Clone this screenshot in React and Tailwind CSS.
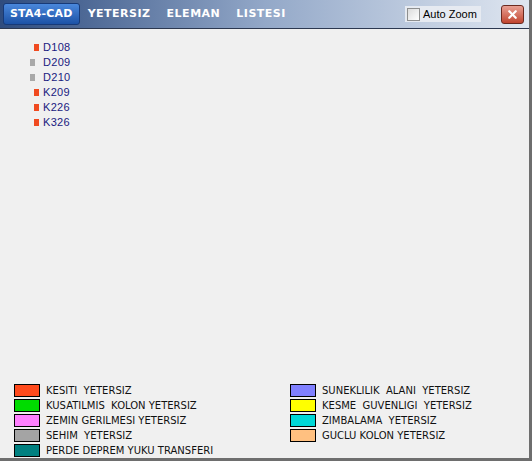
import { X } from 'lucide-react';

const elements = [
  { name: 'D108', color: 'bg-[#f04a20]', indent: false },
  { name: 'D209', color: 'bg-[#a8a8a8]', indent: true },
  { name: 'D210', color: 'bg-[#a8a8a8]', indent: true },
  { name: 'K209', color: 'bg-[#f04a20]', indent: false },
  { name: 'K226', color: 'bg-[#f04a20]', indent: false },
  { name: 'K326', color: 'bg-[#f04a20]', indent: false },
];

const legendLeft = [
  { label: 'KESITI  YETERSIZ', color: 'bg-[#ff4a1c]' },
  { label: 'KUSATILMIS  KOLON YETERSIZ', color: 'bg-[#00dc00]' },
  { label: 'ZEMIN GERILMESI YETERSIZ', color: 'bg-[#ff80ff]' },
  { label: 'SEHIM  YETERSIZ', color: 'bg-[#a4a4a4]' },
  { label: 'PERDE DEPREM YUKU TRANSFERI', color: 'bg-[#008080]' },
];

const legendRight = [
  { label: 'SUNEKLILIK  ALANI  YETERSIZ', color: 'bg-[#8080ff]' },
  { label: 'KESME  GUVENLIGI  YETERSIZ', color: 'bg-[#ffff00]' },
  { label: 'ZIMBALAMA  YETERSIZ', color: 'bg-[#00d8d8]' },
  { label: 'GUCLU KOLON YETERSIZ', color: 'bg-[#ffc080]' },
];

function LegendRow({ label, color }) {
  return (
    <div className="flex items-center h-[15px]">
      <div className={`w-[26px] h-[13px] border border-black ${color}`} />
      <span className="ml-[6px] text-[10px] text-[#111] whitespace-pre leading-none">{label}</span>
    </div>
  );
}

export default function App() {
  return (
    <div
      className="w-[532px] h-[461px] bg-[#f0f0f0] flex flex-col border-r-[3px] border-b-[3px] border-[#6e6e6e]"
      style={{ fontFamily: '"DejaVu Sans", "Liberation Sans", sans-serif' }}
    >
      {/* Title bar */}
      <div className="h-[29px] shrink-0 flex items-center border-b border-[#2c3850] bg-gradient-to-r from-[#2f4c7e] via-[#93a8c8] to-[#dfe6f0] px-[3px]">
        <div className="h-[22px] px-[6px] flex items-center rounded-[3px] bg-gradient-to-b from-[#4a88dc] to-[#1c52a6] border border-[#173a78] text-white font-bold text-[11px] tracking-[0.2px]">
          STA4-CAD
        </div>
        <div className="flex gap-[16px] ml-[8px] text-white font-bold text-[11px] tracking-[0.5px]">
          <span>YETERSIZ</span>
          <span>ELEMAN</span>
          <span>LISTESI</span>
        </div>
        <div className="ml-auto flex items-center h-[16px] w-[76px] bg-[#e6eaf1] whitespace-nowrap">
          <div className="ml-[2px] w-[13px] h-[13px] border border-[#8e8f8f] bg-gradient-to-br from-[#dcdcdc] to-white" />
          <span className="ml-[3px] text-[11px] text-black" style={{ fontFamily: '"Liberation Sans", sans-serif' }}>
            Auto Zoom
          </span>
        </div>
        <div className="ml-[20px] mr-[2px] w-[23px] h-[19px] rounded-[3px] border border-[#6b2a20] bg-gradient-to-b from-[#e8a094] to-[#c0432e] flex items-center justify-center">
          <X className="w-[13px] h-[13px] text-white" strokeWidth={4} />
        </div>
      </div>

      {/* Element list */}
      <div className="flex-1 pt-[11px] pl-[30px]" style={{ fontFamily: '"Liberation Sans", sans-serif' }}>
        {elements.map((el) => (
          <div key={el.name} className="flex items-center h-[15px]">
            <div className={`w-[5px] h-[7px] ${el.color} ${el.indent ? 'ml-0 mr-[8px]' : 'ml-[4px] mr-[4px]'}`} />
            <span className="text-[11px] text-[#1a1a80] tracking-[0.3px]">{el.name}</span>
          </div>
        ))}
      </div>

      {/* Legend */}
      <div className="flex pb-0 pl-[14px]">
        <div className="w-[276px] flex flex-col">
          {legendLeft.map((l) => (
            <LegendRow key={l.label} {...l} />
          ))}
        </div>
        <div className="flex flex-col">
          {legendRight.map((l) => (
            <LegendRow key={l.label} {...l} />
          ))}
        </div>
      </div>
    </div>
  );
}
